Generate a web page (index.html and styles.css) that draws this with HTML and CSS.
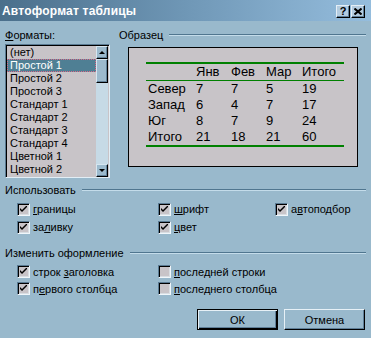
FILE: index.html
```html
<!DOCTYPE html>
<html lang="ru">
<head>
<meta charset="utf-8">
<link rel="stylesheet" href="styles.css">
</head>
<body>
<div class="dlg">
  <div class="titlebar">
    <span class="title">Автоформат таблицы</span>
    <div class="tbtns">
      <span class="tbtn q">?</span>
      <span class="tbtn"><svg width="8" height="7" viewBox="0 0 8 7"><path d="M0.5 0.5 L7.5 6.5 M7.5 0.5 L0.5 6.5" stroke="#000" stroke-width="2"/></svg></span>
    </div>
  </div>
  <div class="body">
    <div class="top">
      <div class="formats">
        <div class="lbl"><u>Ф</u>орматы:</div>
        <div class="listbox">
          <ul class="items">
            <li>(нет)</li>
            <li class="sel">Простой 1</li>
            <li>Простой 2</li>
            <li>Простой 3</li>
            <li>Стандарт 1</li>
            <li>Стандарт 2</li>
            <li>Стандарт 3</li>
            <li>Стандарт 4</li>
            <li>Цветной 1</li>
            <li>Цветной 2</li>
          </ul>
          <div class="sb">
            <span class="sbbtn"><i class="arr up"></i></span>
            <span class="thumb"></span>
            <span class="track"></span>
            <span class="sbbtn"><i class="arr down"></i></span>
          </div>
        </div>
      </div>
      <div class="sample">
        <div class="sep"><span>Образец</span><i class="line"></i></div>
        <div class="preview">
          <div class="tbl">
            <div class="row head"><span></span><span>Янв</span><span>Фев</span><span>Мар</span><span>Итого</span></div>
            <div class="row"><span>Север</span><span>7</span><span>7</span><span>5</span><span>19</span></div>
            <div class="row"><span>Запад</span><span>6</span><span>4</span><span>7</span><span>17</span></div>
            <div class="row"><span>Юг</span><span>8</span><span>7</span><span>9</span><span>24</span></div>
            <div class="row"><span>Итого</span><span>21</span><span>18</span><span>21</span><span>60</span></div>
          </div>
        </div>
      </div>
    </div>

    <div class="sep grp1"><span>Использовать</span><i class="line"></i></div>
    <div class="checks three">
      <label class="cb"><i class="box on"></i><span><u>г</u>раницы</span></label>
      <label class="cb"><i class="box on"></i><span><u>ш</u>рифт</span></label>
      <label class="cb"><i class="box on"></i><span>а<u>в</u>топодбор</span></label>
      <label class="cb"><i class="box on"></i><span>за<u>л</u>ивку</span></label>
      <label class="cb"><i class="box on"></i><span><u>ц</u>вет</span></label>
    </div>

    <div class="sep grp2"><span>Изменить оформление</span><i class="line"></i></div>
    <div class="checks two">
      <label class="cb"><i class="box on"></i><span>строк <u>з</u>аголовка</span></label>
      <label class="cb"><i class="box"></i><span><u>п</u>оследней строки</span></label>
      <label class="cb"><i class="box on"></i><span>п<u>е</u>рвого столбца</span></label>
      <label class="cb"><i class="box"></i><span><u>п</u>оследнего столбца</span></label>
    </div>

    <div class="buttons">
      <button class="btn def">ОК</button>
      <button class="btn">Отмена</button>
    </div>
  </div>
</div>
</body>
</html>
```
FILE: styles.css
```css
* { box-sizing: border-box; }
html, body { margin: 0; padding: 0; }
body {
  width: 371px;
  height: 338px;
  background: #99b9cc;
  font-family: "Liberation Sans", Arial, sans-serif;
  font-size: 11px;
  color: #000;
  overflow: hidden;
}
u { text-decoration: underline; text-underline-offset: 1px; }

.titlebar {
  height: 21px;
  display: flex;
  align-items: center;
  padding-left: 2px;
  padding-right: 6px;
  background: linear-gradient(to right, #4a6f8b, #6f97b6 50%, #95bddd);
}
.title {
  color: #fff;
  font-weight: bold;
  font-size: 12px;
  letter-spacing: 0.2px;
}
.tbtns {
  margin-left: auto;
  display: flex;
  gap: 1px;
  align-self: flex-start;
  margin-top: 5px;
}
.tbtn {
  width: 14px;
  height: 13px;
  background: #b4cce0;
  border-top: 1px solid #e4eef6;
  border-left: 1px solid #e4eef6;
  border-right: 1px solid #000;
  border-bottom: 1px solid #000;
  box-shadow: inset -1px -1px 0 #5f7f98;
  display: flex;
  align-items: center;
  justify-content: center;
}
.tbtn.q {
  font-weight: bold;
  font-size: 11px;
  line-height: 11px;
}

.body {
  padding: 8px 5px 0 5px;
}
.top {
  display: flex;
}
.formats {
  width: 105px;
}
.lbl {
  height: 12px;
  line-height: 12px;
}
.listbox {
  margin-top: 3px;
  height: 134px;
  display: flex;
  border-top: 1px solid #5a7a92;
  border-left: 1px solid #5a7a92;
  border-right: 1px solid #e2eef6;
  border-bottom: 1px solid #e2eef6;
  box-shadow: inset 1px 1px 0 #000;
  padding: 1px 0 0 1px;
  background: #c8c4c8;
}
.items {
  list-style: none;
  margin: 0;
  padding: 0;
  width: 89px;
}
.items li {
  height: 13px;
  line-height: 13px;
  padding-left: 3px;
  white-space: nowrap;
}
.items li.sel {
  background: #4f7f94;
  color: #fff;
  outline: 1px dotted #d86a86;
  outline-offset: -1px;
}
.sb {
  width: 12px;
  display: flex;
  flex-direction: column;
  background: #c6dae6;
}
.sbbtn, .thumb {
  width: 12px;
  background: #9cbacd;
  border-top: 1px solid #d6e6f0;
  border-left: 1px solid #d6e6f0;
  border-right: 1px solid #000;
  border-bottom: 1px solid #000;
  box-shadow: inset -1px -1px 0 #62829a;
}
.sbbtn {
  height: 13px;
  display: flex;
  align-items: center;
  justify-content: center;
}
.thumb { height: 24px; }
.track { flex: 1; }
.arr {
  width: 0;
  height: 0;
  border-left: 3px solid transparent;
  border-right: 3px solid transparent;
}
.arr.up { border-bottom: 3px solid #000; }
.arr.down { border-top: 3px solid #000; }

.sample {
  margin-left: 9px;
  flex: 1;
}
.sep {
  display: flex;
  align-items: center;
  height: 12px;
  line-height: 12px;
  white-space: nowrap;
}
.sep .line {
  flex: 1;
  margin-left: 6px;
  height: 2px;
  border-top: 1px solid #50768f;
  border-bottom: 1px solid #c4dcea;
}
.preview {
  margin-top: 6px;
  margin-left: 9px;
  width: 230px;
  height: 120px;
  border: 1px solid #000;
  background: #c8c4c8;
  padding: 14px 0 0 17px;
  font-size: 13px;
}
.tbl {
  width: 198px;
  border-top: 2px solid #008000;
  border-bottom: 2px solid #008000;
}
.row {
  display: grid;
  grid-template-columns: 48px 35px 35px 36px 1fr;
  padding-left: 2px;
  height: 16px;
  line-height: 16px;
}
.row.head {
  border-bottom: 1px solid #008000;
  height: 17px;
}

.grp1 { margin-top: 6px; }
.grp2 { margin-top: 11px; }
.checks {
  display: grid;
  padding-left: 12px;
  margin-top: 4px;
}
.checks.three {
  grid-template-columns: 141px 117px 1fr;
  grid-auto-rows: 18px;
}
.checks.two {
  grid-template-columns: 141px 1fr;
  grid-auto-rows: 17px;
}
.cb {
  display: flex;
  align-items: center;
  gap: 3px;
  white-space: nowrap;
}
.box {
  width: 13px;
  height: 13px;
  flex: none;
  background: #c8c4c8;
  border-top: 1px solid #5a7a92;
  border-left: 1px solid #5a7a92;
  border-right: 1px solid #f0f6fa;
  border-bottom: 1px solid #f0f6fa;
  box-shadow: inset 1px 1px 0 #000, inset -1px -1px 0 #d8dde2;
  position: relative;
}
.box.on::after {
  content: "";
  position: absolute;
  left: 2px;
  top: 2px;
  width: 7px;
  height: 7px;
  background: no-repeat center / 7px 7px url("data:image/svg+xml;utf8,<svg xmlns='http://www.w3.org/2000/svg' width='7' height='7' viewBox='0 0 7 7'><path d='M0 2 L0 4 L2 6 L7 1 L7 -1 L2 4 Z' fill='black'/></svg>");
}

.buttons {
  display: flex;
  justify-content: flex-end;
  gap: 6px;
  margin-top: 12px;
  padding-right: 1px;
}
.btn {
  width: 81px;
  height: 21px;
  font-family: "Liberation Sans", Arial, sans-serif;
  font-size: 11px;
  color: #000;
  background: #99b9cc;
  border-top: 1px solid #e6f0f6;
  border-left: 1px solid #e6f0f6;
  border-right: 1px solid #000;
  border-bottom: 1px solid #000;
  box-shadow: inset -1px -1px 0 #5f7f98;
  padding: 0;
}
.btn.def {
  border: 1px solid #000;
  box-shadow: inset 1px 1px 0 #e6f0f6, inset -1px -1px 0 #000, inset -2px -2px 0 #5f7f98;
}
```
